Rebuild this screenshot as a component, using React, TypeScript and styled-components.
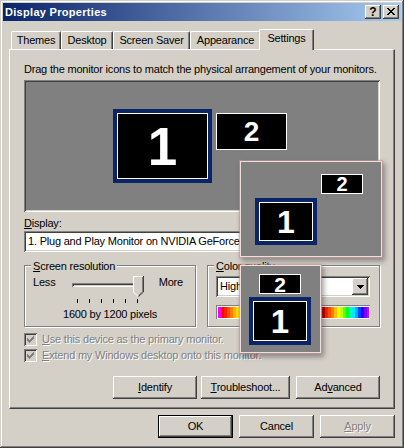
import React from 'react';
import styled, { createGlobalStyle, css } from 'styled-components';

const FACE = '#d4d0c8';
const SHADOW = '#808080';
const DARK = '#404040';
const WHITE = '#ffffff';
const NAVY = '#0a246a';
const FONT = '"Liberation Sans", Arial, sans-serif';

const GlobalStyle = createGlobalStyle`
  html, body { margin: 0; padding: 0; background: ${FACE}; }
  body { font-family: ${FONT}; font-size: 11px; line-height: 13px; color: #000; letter-spacing: -0.2px; }
  *, *::before, *::after { box-sizing: border-box; }
`;

const raisedBevel = css`
  box-shadow: inset -1px -1px ${DARK}, inset 1px 1px ${WHITE}, inset -2px -2px ${SHADOW}, inset 2px 2px ${FACE};
`;
const sunkenBevel = css`
  box-shadow: inset 1px 1px ${SHADOW}, inset -1px -1px ${WHITE}, inset 2px 2px ${DARK}, inset -2px -2px ${FACE};
`;

/* ---------- window frame ---------- */
const Window = styled.div`
  position: relative;
  width: 404px;
  height: 448px;
  padding: 3px;
  background: ${FACE};
  display: flex;
  flex-direction: column;
  overflow: hidden;
  box-shadow: inset -1px -1px ${DARK}, inset 1px 1px ${FACE}, inset -2px -2px ${SHADOW}, inset 2px 2px ${WHITE};
`;

const TitleBar = styled.div`
  height: 18px;
  flex: none;
  display: flex;
  align-items: center;
  padding: 0 2px;
  background: linear-gradient(to right, ${NAVY}, #a6caf0);
  color: #fff;
  font-weight: bold;
  font-size: 11px;
  letter-spacing: 0.3px;
`;

const TitleText = styled.span`
  flex: 1;
  white-space: nowrap;
`;

const CaptionButtons = styled.div`
  display: flex;
  gap: 2px;
`;

const CaptionButton = styled.div`
  width: 16px;
  height: 14px;
  background: ${FACE};
  ${raisedBevel};
  display: flex;
  align-items: center;
  justify-content: center;
  color: #000;
  font-weight: bold;
  font-size: 12px;
  line-height: 12px;
  letter-spacing: 0;
  padding-bottom: 1px;
`;

const Body = styled.div`
  flex: 1;
  display: flex;
  flex-direction: column;
  padding: 8px 6px 0;
`;

/* ---------- tabs ---------- */
const TabRow = styled.div`
  height: 20px;
  display: flex;
  align-items: flex-end;
  padding-left: 2px;
  position: relative;
  z-index: 2;
`;

const Tab = styled.div<{ $w: number; $active?: boolean }>`
  width: ${(p) => p.$w}px;
  height: 18px;
  display: flex;
  align-items: center;
  justify-content: center;
  background: ${FACE};
  border-top: 1px solid ${WHITE};
  border-left: 1px solid ${WHITE};
  border-right: 1px solid ${DARK};
  border-radius: 2px 2px 0 0;
  box-shadow: inset -1px 0 ${SHADOW};
  white-space: nowrap;
  ${(p) =>
    p.$active &&
    css`
      width: ${p.$w + 4}px;
      height: 21px;
      margin: 0 -2px -1px;
      padding-bottom: 3px;
      position: relative;
      z-index: 3;
    `}
`;

const Panel = styled.div`
  height: 360px;
  flex: none;
  display: flex;
  flex-direction: column;
  padding: 13px 14px 0;
  border-top: 1px solid ${WHITE};
  border-left: 1px solid ${WHITE};
  border-right: 1px solid ${DARK};
  border-bottom: 1px solid ${DARK};
  box-shadow: inset -1px -1px ${SHADOW};
`;

const Text = styled.div<{ $mt?: number }>`
  margin-top: ${(p) => p.$mt ?? 0}px;
  height: 13px;
  white-space: nowrap;
`;

const Mn = styled.span`
  text-decoration: underline;
  text-underline-offset: 1px;
`;

/* ---------- monitor arrangement ---------- */
const MonitorArea = styled.div`
  margin-top: 4px;
  height: 132px;
  flex: none;
  position: relative;
  background: ${SHADOW};
  ${sunkenBevel};
`;

const Monitor = styled.div<{ $x: number; $y: number; $w: number; $h: number; $primary?: boolean; $size: number }>`
  position: absolute;
  left: ${(p) => p.$x + (p.$primary ? 4 : 0)}px;
  top: ${(p) => p.$y + (p.$primary ? 4 : 0)}px;
  width: ${(p) => p.$w - (p.$primary ? 8 : 0)}px;
  height: ${(p) => p.$h - (p.$primary ? 8 : 0)}px;
  background: #000;
  border: 1px solid ${WHITE};
  box-shadow: ${(p) => (p.$primary ? `0 0 0 4px ${NAVY}` : 'none')};
  display: flex;
  align-items: center;
  justify-content: center;
  color: #fff;
  font-family: ${FONT};
  font-weight: bold;
  font-size: ${(p) => p.$size}px;
  line-height: 1;
  letter-spacing: 0;
`;

const Ghost = styled.div<{ $x: number; $y: number; $w: number; $h: number }>`
  position: absolute;
  left: ${(p) => p.$x}px;
  top: ${(p) => p.$y}px;
  width: ${(p) => p.$w}px;
  height: ${(p) => p.$h}px;
  background: ${SHADOW};
  border: 1px solid #eedede;
  box-shadow: 0 0 1px 1px rgba(200, 150, 150, 0.6), 2px 3px 5px 1px rgba(0, 0, 0, 0.35);
  z-index: 10;
`;

/* ---------- fields ---------- */
const Field = styled.div<{ $mt?: number }>`
  margin-top: ${(p) => p.$mt ?? 0}px;
  height: 21px;
  flex: none;
  display: flex;
  align-items: center;
  padding: 2px;
  background: #fff;
  ${sunkenBevel};
`;

const FieldText = styled.span`
  flex: 1;
  padding-left: 2px;
  white-space: nowrap;
  overflow: hidden;
`;

const DropButton = styled.div`
  width: 16px;
  height: 17px;
  flex: none;
  background: ${FACE};
  ${raisedBevel};
  display: flex;
  align-items: center;
  justify-content: center;
`;

const DownArrow = () => (
  <svg width="7" height="4" viewBox="0 0 7 4" shapeRendering="crispEdges">
    <path d="M0 0H7V1H6V2H5V3H4V4H3V3H2V2H1V1H0Z" fill="#000" />
  </svg>
);

/* ---------- group boxes ---------- */
const GroupRow = styled.div`
  margin-top: 13px;
  display: grid;
  grid-template-columns: 172px 173px;
  column-gap: 11px;
`;

const GroupBox = styled.div`
  height: 62px;
  display: flex;
  flex-direction: column;
  border: 1px solid ${SHADOW};
  box-shadow: inset 1px 1px ${WHITE}, 1px 1px ${WHITE};
`;

const Legend = styled.div`
  align-self: flex-start;
  margin: -6px 0 0 6px;
  padding: 0 2px;
  height: 13px;
  background: ${FACE};
  white-space: nowrap;
`;

const SliderRow = styled.div`
  margin-top: 3px;
  height: 28px;
  display: flex;
  align-items: flex-start;
  padding: 0 12px 0 8px;
`;

const SliderLabel = styled.span`
  line-height: 13px;
`;

const Slider = styled.div`
  position: relative;
  width: 71px;
  height: 28px;
  margin: 0 auto 0 17px;
  display: flex;
  flex-direction: column;
`;

const Track = styled.div`
  margin-top: 7px;
  height: 4px;
  background: ${FACE};
  ${sunkenBevel};
`;

const Ticks = styled.div`
  margin-top: 12px;
  height: 4px;
  display: flex;
  justify-content: space-between;
  padding: 0 5px;
`;

const Tick = styled.span`
  width: 1px;
  height: 4px;
  background: #000;
`;

const Thumb = styled.svg`
  position: absolute;
  left: 61px;
  top: 0;
`;

const CenterText = styled.div`
  margin-top: 4px;
  text-align: center;
  white-space: nowrap;
`;

const SelectWrap = styled.div`
  margin: 3px 9px 0 8px;
`;

const ColorBar = styled.div<{ $bg: string }>`
  margin: 8px 9px 0 8px;
  height: 14px;
  padding: 1px;
  background: ${WHITE};
  border-top: 1px solid ${SHADOW};
  border-left: 1px solid ${SHADOW};
  &::after {
    content: '';
    display: block;
    height: 100%;
    background: ${(p) => p.$bg};
  }
`;

/* ---------- checkboxes ---------- */
const CheckRow = styled.div<{ $mt: number }>`
  margin-top: ${(p) => p.$mt}px;
  height: 13px;
  display: flex;
  align-items: center;
  gap: 5px;
  color: ${SHADOW};
  text-shadow: 1px 1px ${WHITE};
  white-space: nowrap;
`;

const CheckBox = styled.span`
  width: 13px;
  height: 13px;
  flex: none;
  background: ${FACE};
  ${sunkenBevel};
  display: flex;
  align-items: center;
  justify-content: center;
`;

const CheckMark = () => (
  <svg width="7" height="7" viewBox="0 0 7 7" shapeRendering="crispEdges">
    {[2, 3, 4, 3, 2, 1, 0].map((y, x) => (
      <rect key={x} x={x} y={y} width="1" height="3" fill={SHADOW} />
    ))}
  </svg>
);

/* ---------- buttons ---------- */
const ButtonRow = styled.div<{ $mt: number; $gap: number }>`
  margin-top: ${(p) => p.$mt}px;
  display: flex;
  justify-content: flex-end;
  gap: ${(p) => p.$gap}px;
`;

const Button = styled.div<{ $w: number; $default?: boolean; $disabled?: boolean; $ml?: number }>`
  width: ${(p) => p.$w}px;
  height: 23px;
  margin-left: ${(p) => p.$ml ?? 0}px;
  display: flex;
  align-items: center;
  justify-content: center;
  background: ${FACE};
  white-space: nowrap;
  ${raisedBevel};
  ${(p) =>
    p.$default &&
    css`
      box-shadow: inset 0 0 0 1px #000, inset -2px -2px ${DARK}, inset 2px 2px ${WHITE}, inset -3px -3px ${SHADOW};
    `}
  ${(p) =>
    p.$disabled &&
    css`
      color: ${SHADOW};
      text-shadow: 1px 1px ${WHITE};
    `}
`;

/* ---------- colour spectrum ---------- */
const buildSpectrum = () => {
  const bands: string[] = [];
  const left = [300, 0, 8, 18, 30, 42, 52, 62, 75, 95, 120, 150, 180, 200, 220, 240, 260, 280, 300];
  let x = 0;
  left.forEach((h) => {
    bands.push(`hsl(${h},100%,50%) ${x}px ${x + 3}px`);
    x += 3;
  });
  bands.push(`#a0a0a0 ${x}px 104px`);
  x = 104;
  const right = [0, 8, 18, 30, 45, 58, 75, 100, 130, 165, 185, 200, 225, 250, 270, 290, 305];
  right.forEach((h) => {
    bands.push(`hsl(${h},100%,${h === 0 ? 38 : 50}%) ${x}px ${x + 3}px`);
    x += 3;
  });
  return `linear-gradient(to right, ${bands.join(', ')})`;
};
const SPECTRUM = buildSpectrum();

const CloseIcon = () => (
  <svg width="8" height="7" viewBox="0 0 8 7" shapeRendering="crispEdges">
    <path
      d="M0 0H2V1H3V2H5V1H6V0H8V1H7V2H6V3H5V4H6V5H7V6H8V7H6V6H5V5H3V6H2V7H0V6H1V5H2V4H3V3H2V2H1V1H0Z"
      fill="#000"
    />
  </svg>
);

export default function App() {
  return (
    <>
      <GlobalStyle />
      <Window>
        <TitleBar>
          <TitleText>Display Properties</TitleText>
          <CaptionButtons>
            <CaptionButton>?</CaptionButton>
            <CaptionButton>
              <CloseIcon />
            </CaptionButton>
          </CaptionButtons>
        </TitleBar>
        <Body>
          <TabRow>
            <Tab $w={50}>Themes</Tab>
            <Tab $w={52}>Desktop</Tab>
            <Tab $w={77}>Screen Saver</Tab>
            <Tab $w={71}>Appearance</Tab>
            <Tab $w={51} $active>
              Settings
            </Tab>
          </TabRow>
          <Panel>
            <Text>Drag the monitor icons to match the physical arrangement of your monitors.</Text>
            <MonitorArea>
              <Monitor $x={89} $y={29} $w={99} $h={74} $primary $size={53}>
                1
              </Monitor>
              <Monitor $x={192} $y={33} $w={71} $h={37} $size={28}>
                2
              </Monitor>
            </MonitorArea>
            <Text $mt={5}>
              <Mn>D</Mn>isplay:
            </Text>
            <Field $mt={1}>
              <FieldText>1. Plug and Play Monitor on NVIDIA GeForce FX 5200</FieldText>
              <DropButton>
                <DownArrow />
              </DropButton>
            </Field>
            <GroupRow>
              <GroupBox>
                <Legend>
                  <Mn>S</Mn>creen resolution
                </Legend>
                <SliderRow>
                  <SliderLabel>Less</SliderLabel>
                  <Slider>
                    <Track />
                    <Ticks>
                      {[0, 1, 2, 3, 4, 5].map((i) => (
                        <Tick key={i} />
                      ))}
                    </Ticks>
                    <Thumb width="11" height="21" viewBox="0 0 11 21" shapeRendering="crispEdges">
                      <path d="M0 0H11V16L5.5 21L0 16Z" fill={FACE} />
                      <path d="M0.5 16V0.5H10" stroke={WHITE} fill="none" />
                      <path d="M0.5 16L5 20.5" stroke={WHITE} fill="none" shapeRendering="auto" />
                      <path d="M10.5 0V16" stroke={DARK} fill="none" />
                      <path d="M10.5 16L5.5 20.5" stroke={DARK} fill="none" shapeRendering="auto" />
                      <path d="M9.5 1V15.5" stroke={SHADOW} fill="none" />
                      <path d="M9.5 15.5L5.5 19.5" stroke={SHADOW} fill="none" shapeRendering="auto" />
                    </Thumb>
                  </Slider>
                  <SliderLabel>More</SliderLabel>
                </SliderRow>
                <CenterText>1600 by 1200 pixels</CenterText>
              </GroupBox>
              <GroupBox>
                <Legend>
                  <Mn>C</Mn>olor quality
                </Legend>
                <SelectWrap>
                  <Field>
                    <FieldText>Highest (32 bit)</FieldText>
                    <DropButton>
                      <DownArrow />
                    </DropButton>
                  </Field>
                </SelectWrap>
                <ColorBar $bg={SPECTRUM} />
              </GroupBox>
            </GroupRow>
            <CheckRow $mt={6}>
              <CheckBox>
                <CheckMark />
              </CheckBox>
              <span>
                <Mn>U</Mn>se this device as the primary monitor.
              </span>
            </CheckRow>
            <CheckRow $mt={3}>
              <CheckBox>
                <CheckMark />
              </CheckBox>
              <span>
                <Mn>E</Mn>xtend my Windows desktop onto this monitor.
              </span>
            </CheckRow>
            <ButtonRow $mt={14} $gap={4}>
              <Button $w={84}>
                <span>
                  <Mn>I</Mn>dentify
                </span>
              </Button>
              <Button $w={89}>
                <span>
                  <Mn>T</Mn>roubleshoot...
                </span>
              </Button>
              <Button $w={84} $ml={2}>
                <span>
                  Ad<Mn>v</Mn>anced
                </span>
              </Button>
            </ButtonRow>
          </Panel>
          <ButtonRow $mt={6} $gap={6}>
            <Button $w={75} $default>
              OK
            </Button>
            <Button $w={75}>Cancel</Button>
            <Button $w={75} $disabled>
              <span>
                <Mn>A</Mn>pply
              </span>
            </Button>
          </ButtonRow>
        </Body>

        <Ghost $x={240} $y={161} $w={142} $h={96}>
          <Monitor $x={80} $y={12} $w={42} $h={20} $size={20}>
            2
          </Monitor>
          <Monitor $x={14} $y={36} $w={62} $h={47} $primary $size={32}>
            1
          </Monitor>
        </Ghost>
        <Ghost $x={240} $y={265} $w={81} $h={88}>
          <Monitor $x={18} $y={8} $w={42} $h={20} $size={21}>
            2
          </Monitor>
          <Monitor $x={8} $y={31} $w={62} $h={48} $primary $size={33}>
            1
          </Monitor>
        </Ghost>
      </Window>
    </>
  );
}
